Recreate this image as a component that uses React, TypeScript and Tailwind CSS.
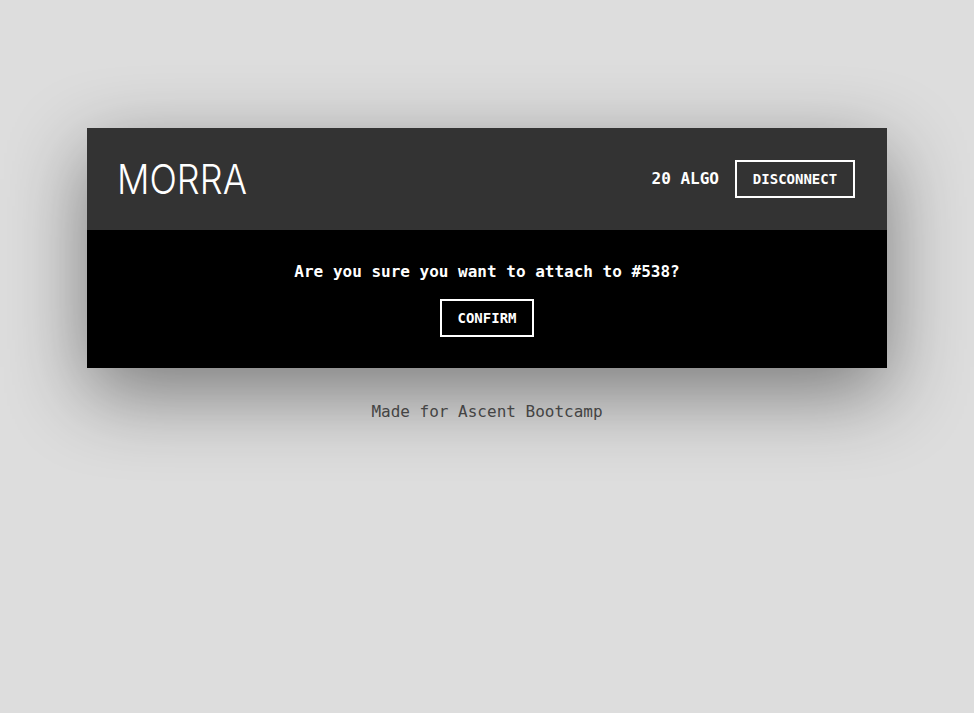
const mono = "font-['DejaVu_Sans_Mono','Liberation_Mono',monospace]";

const App = () => {
  return (
    <div className={`min-h-screen bg-[#dddddd] ${mono}`}>
      <div className="flex flex-col items-center pt-[128px]">
        {/* Card */}
        <div className="w-[800px] shadow-[0_25px_80px_rgba(0,0,0,0.45)]">
          {/* Header */}
          <div className="flex h-[102px] items-center justify-between bg-[#333333] pl-[30px] pr-8">
            <h1 className="origin-left scale-x-[0.88] font-['Inter',sans-serif] text-[41px] font-light leading-none text-white">
              MORRA
            </h1>
            <div className="flex items-center gap-4">
              <span className="text-base font-bold text-white">20 ALGO</span>
              <button className="h-[38px] w-[120px] border-2 border-white text-sm font-bold text-white">
                DISCONNECT
              </button>
            </div>
          </div>

          {/* Body */}
          <div className="flex flex-col items-center bg-black pt-[30px] pb-[31px]">
            <p className="text-base font-bold leading-6 text-white">
              Are you sure you want to attach to #538?
            </p>
            <button className="mt-[15px] h-[38px] w-[94px] border-2 border-white text-sm font-bold text-white">
              CONFIRM
            </button>
          </div>
        </div>

        {/* Footer */}
        <p className="mt-[32px] text-base leading-6 text-[#444444]">Made for Ascent Bootcamp</p>
      </div>
    </div>
  );
};

export default App;
